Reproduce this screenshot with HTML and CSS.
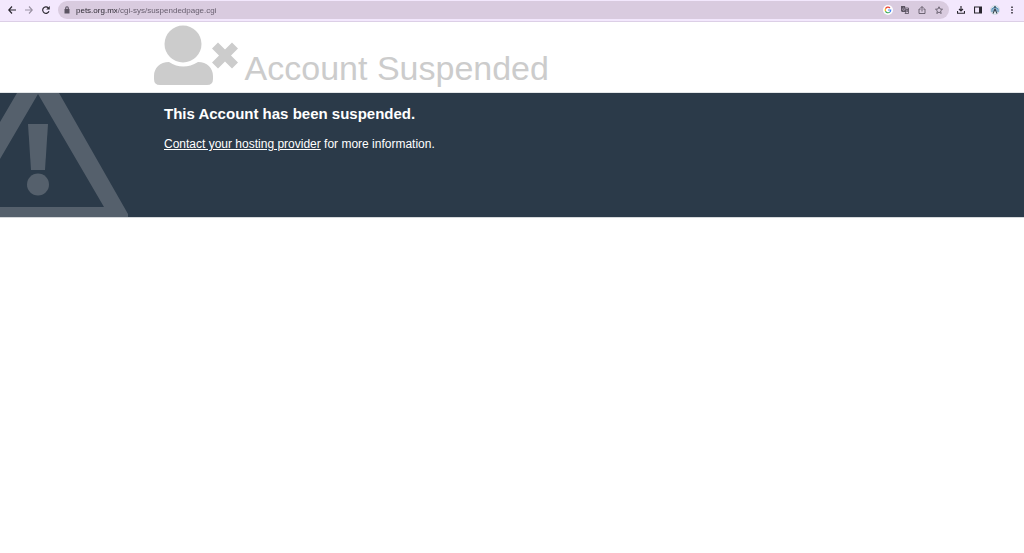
FILE: index.html
```html
<!doctype html>
<html lang="en">
  <head>
    <meta charset="utf-8" />
    <title>Account Suspended</title>
    <link rel="stylesheet" href="styles.css">
  </head>
  <body>
    <nav class="toolbar" aria-label="Browser">
      <button class="tool" aria-label="Back">
        <svg viewBox="0 0 16 16"><path d="M16 8H2M8 1L1.500 8 8 15" /></svg>
      </button>
      <button class="tool tool-off" aria-label="Forward">
        <svg viewBox="0 0 16 16"><path d="M0 8h14M8 1l6.500 7L8 15" /></svg>
      </button>
      <button class="tool" aria-label="Reload">
        <svg viewBox="0 0 16 16"><path d="M14 10.500A6.500 6.500 0 1 1 12.500 3.500" /><path class="solid" d="M15.500 0v7H8.500z" /></svg>
      </button>
      <div class="address">
        <svg class="lock" viewBox="0 0 12 16"><path class="solid" d="M1 6h10v9H1z" /><path d="M3.500 7V4a2.500 2.500 0 0 1 5 0v3" /></svg>
        <input class="url" type="text" aria-label="Address" value="pets.org.mx/cgi-sys/suspendedpage.cgi" />
        <button class="tool tool-soft" aria-label="Google">
          <svg class="google" viewBox="0 0 20 20">
            <circle class="g-disc" cx="10" cy="10" r="10" />
            <path class="g-red" d="M5 7.500A5.500 5.500 0 0 1 14 6" />
            <path class="g-yellow" d="M5 12.500a5.500 5.500 0 0 1 0-5" />
            <path class="g-green" d="M13.500 14.200A5.500 5.500 0 0 1 5 12.500" />
            <path class="g-blue" d="M10 10h5.500a5.500 5.500 0 0 1-2 4.200" />
          </svg>
        </button>
        <button class="tool tool-soft" aria-label="Translate">
          <svg viewBox="0 0 16 16">
            <path class="solid" d="M0 0h8l3 12H2L0 10z" />
            <path class="thin" d="M9 4h6v11H8l2-3M10 7h5M12.500 6v1M14 7c0 2-2 4-3 4M11 8l3 4" />
            <path class="g-letter" d="M7 5a2.300 2.300 0 1 0 .5 2H5.500" />
          </svg>
        </button>
        <button class="tool tool-soft" aria-label="Share">
          <svg viewBox="0 0 16 16"><path class="thin" d="M5.500 6H2v9h12V6h-3.500M8 11V1.500M5 4l3-3 3 3" /></svg>
        </button>
        <button class="tool tool-soft" aria-label="Bookmark">
          <svg viewBox="0 0 16 16"><path class="thin" d="M8 1.500l2 4.500 5 .5-3.800 3.300L12.400 15 8 12.200 3.600 15l1.200-5.200L1 6.500 6 6z" /></svg>
        </button>
      </div>
      <button class="tool" aria-label="Downloads">
        <svg viewBox="0 0 16 16"><path d="M8 0v10M4 6l4 4 4-4M1 10v4.500h14V10" /></svg>
      </button>
      <button class="tool" aria-label="Side panel">
        <svg viewBox="0 0 16 16"><path d="M1 2h14v12H1z" /><path class="solid" d="M10 2h5v12h-5z" /></svg>
      </button>
      <button class="tool" aria-label="Profile">
        <svg class="profile" viewBox="0 0 20 20">
          <circle class="p-disc" cx="10" cy="10" r="9" />
          <path class="p-blue" d="M4 14V8l6-4 6 4v6M6 10h8" />
          <path class="p-dark" d="M10 2v4M6 17l4-9 4 9" />
        </svg>
      </button>
      <button class="tool" aria-label="Menu">
        <svg viewBox="0 0 16 16"><path class="solid" d="M6.500 1h3v3h-3zM6.500 6.500h3v3h-3zM6.500 12h3v3h-3z" /></svg>
      </button>
    </nav>

    <header class="head">
      <svg class="user-x" viewBox="1 0 85 60" aria-hidden="true">
        <circle cx="30" cy="19" r="18.500" />
        <path d="M16 37Q30 46 45 37C54 37 60 43 60 51V54Q60 60 54 60H7Q1 60 1 54V51C1 43 7 37 16 37Z" />
        <path d="M65 17.500L72 24.500 79 17.500 85 23.500 78 30.500 85 37.500 79 43.500 72 36.500 65 43.500 59 37.500 66 30.500 59 23.500Z" />
      </svg>
      <h1>Account Suspended</h1>
    </header>

    <main class="info">
      <svg class="warning" viewBox="0 0 128 124" aria-hidden="true">
        <path fill-rule="evenodd" d="M17 0H59L128 121V124H0V114H104L38 1 0 66V29Z" />
        <path d="M28 31H48L45 77H31Z" />
        <circle cx="38" cy="91.500" r="11" />
      </svg>
      <div class="info-text">
        <h2>This Account has been suspended.</h2>
        <p><a href="#">Contact your hosting provider</a> for more information.</p>
      </div>
    </main>
  </body>
</html>
```

FILE: styles.css
```css
body {
  margin: 0;
  background-color: white;
  font-family: "Liberation Sans", Arial, sans-serif;
}

/* browser bar */
.toolbar {
  display: flex;
  align-items: center;
  gap: 7px;
  height: 20px;
  padding: 0 7px 1px;
  background-color: #f3e8fd;
  border-bottom: 1px solid #dccfe6;
}
.tool {
  display: flex;
  align-items: center;
  justify-content: center;
  width: 10px;
  height: 18px;
  padding: 0;
  border: 0;
  background: none;
  color: #29262e;
}
.tool-off { color: #9a92a3; }
.tool-soft { color: #5b5462; }
.toolbar svg {
  flex: none;
  width: 8px;
  height: 8px;
  fill: none;
  stroke: currentColor;
  stroke-width: 2.3;
}
.toolbar .solid {
  fill: currentColor;
  stroke: none;
}
.toolbar .thin { stroke-width: 1.7; }
.address {
  display: flex;
  flex: 1;
  align-items: center;
  gap: 7px;
  height: 18px;
  padding: 0 5px 0 6px;
  border-radius: 9px;
  background-color: #d9cbdf;
}
.address .lock {
  width: 6px;
  color: #5b5462;
}
.url {
  flex: 1;
  min-width: 0;
  height: 16px;
  margin-left: -1px;
  padding: 0;
  border: 0;
  outline: 0;
  /* host is darker than the path */
  background: linear-gradient(to right, #29262e 41px, #625969 41px);
  background-clip: text;
  color: transparent;
  font-family: "Liberation Sans", Arial, sans-serif;
  font-size: 8px;
}
.toolbar .google,
.toolbar .profile {
  width: 10px;
  height: 10px;
}
.g-disc { fill: white; stroke: none; }
.g-red { stroke: #ea4335; }
.g-yellow { stroke: #fbbc05; }
.g-green { stroke: #34a853; }
.g-blue { stroke: #4285f4; }
.g-letter { stroke: #d9cbdf; stroke-width: 1; }
.p-disc { fill: #e6eef0; stroke: #b9c9d2; stroke-width: 1; }
.p-blue { stroke: #4a86b5; }
.p-dark { stroke: #31424f; }

/* page */
.head {
  display: flex;
  align-items: flex-end;
  gap: 6px;
  height: 63px;
  padding: 0 15% 7px;
  border-bottom: 1px solid #e3e6e8;
  color: #ccc;
}
.user-x {
  flex: none;
  width: 85px;
  height: 60px;
  fill: currentColor;
}
h1 {
  margin: 0;
  font-size: 34px;
  font-weight: normal;
  line-height: 34px;
}
.info {
  display: flex;
  border-bottom: 1px solid #d5d8db;
  background-color: #2b3a49;
}
.warning {
  flex: none;
  width: 128px;
  height: 124px;
  fill: #55606c;
}
.info-text {
  padding: 12px 36px;
  color: white;
}
h2 {
  margin: 0 0 12px;
  font-size: 15px;
  line-height: 18px;
}
p {
  margin: 0;
  font-size: 12px;
  line-height: 18px;
}
a { color: white; }
```
